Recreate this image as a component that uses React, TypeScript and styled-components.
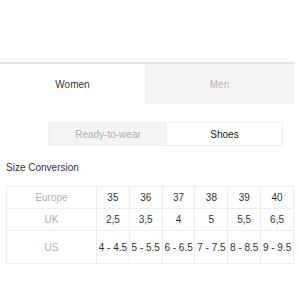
import React, { useState } from "react";
import styled, { createGlobalStyle } from "styled-components";

const Global = createGlobalStyle`
  html, body { margin: 0; padding: 0; background: #fff; }
  body { font-family: "Liberation Sans", Arial, sans-serif; }
`;

const Page = styled.div`
  width: 300px;
  padding-top: 62px;
`;

const TabBar = styled.div`
  width: 295px;
  border-top: 2px solid #e6e6e6;
  display: grid;
  grid-template-columns: 145px 149px;
`;

const Tab = styled.button<{ $active: boolean }>`
  all: unset;
  height: 40px;
  display: flex;
  align-items: center;
  justify-content: center;
  font-size: 10px;
  color: ${(p) => (p.$active ? "#333" : "#b5b5b5")};
  background: ${(p) => (p.$active ? "#fff" : "#f4f4f4")};
`;

const SegmentWrap = styled.div`
  padding: 18px 0 0 48px;
`;

const Segment = styled.div`
  width: 233px;
  height: 22px;
  border: 1px solid #efefef;
  display: grid;
  grid-template-columns: 118px 115px;
`;

const SegButton = styled.div<{ $active: boolean }>`
  display: flex;
  align-items: center;
  justify-content: center;
  font-size: 10px;
  color: ${(p) => (p.$active ? "#222" : "#b0b0b0")};
  background: ${(p) => (p.$active ? "#fff" : "#f4f4f4")};
`;

const Title = styled.div`
  margin: 16px 0 0 6px;
  font-size: 10px;
  color: #333;
  line-height: 12px;
`;

const Table = styled.table`
  margin: 12px 0 0 6px;
  border-collapse: collapse;
  table-layout: fixed;
  width: 288px;
  font-size: 10px;
`;

const Row = styled.tr<{ $tall?: boolean }>`
  height: ${(p) => (p.$tall ? "33px" : "22px")};
`;

const Head = styled.td`
  width: 89px;
  border: 1px solid #eeeeee;
  color: #b0b0b0;
  text-align: center;
  padding: 0;
`;

const Cell = styled.td`
  border: 1px solid #eeeeee;
  color: #333;
  text-align: center;
  padding: 0;
  white-space: nowrap;
`;

const rows: { label: string; values: string[]; tall?: boolean }[] = [
  { label: "Europe", values: ["35", "36", "37", "38", "39", "40"] },
  { label: "UK", values: ["2,5", "3,5", "4", "5", "5,5", "6,5"] },
  { label: "US", values: ["4 - 4.5", "5 - 5.5", "6 - 6.5", "7 - 7.5", "8 - 8.5", "9 - 9.5"], tall: true },
];

export default function App() {
  const [gender, setGender] = useState("Women");
  return (
    <Page>
      <Global />
      <TabBar>
        {["Women", "Men"].map((g) => (
          <Tab key={g} $active={gender === g} onClick={() => setGender(g)}>
            {g}
          </Tab>
        ))}
      </TabBar>
      <SegmentWrap>
        <Segment>
          <SegButton $active={false}>Ready-to-wear</SegButton>
          <SegButton $active>Shoes</SegButton>
        </Segment>
      </SegmentWrap>
      <Title>Size Conversion</Title>
      <Table>
        <tbody>
          {rows.map((r) => (
            <Row key={r.label} $tall={r.tall}>
              <Head>{r.label}</Head>
              {r.values.map((v, i) => (
                <Cell key={i}>{v}</Cell>
              ))}
            </Row>
          ))}
        </tbody>
      </Table>
    </Page>
  );
}
